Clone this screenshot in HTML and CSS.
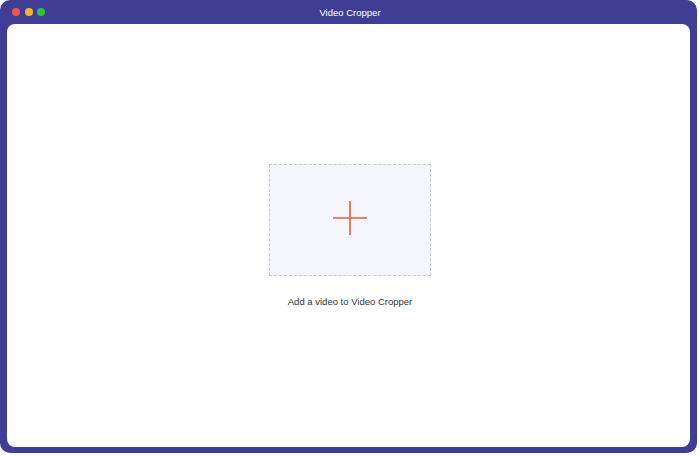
FILE: index.html
```html
<!DOCTYPE html>
<html lang="en">
<head>
    <meta charset="UTF-8">
    <meta name="viewport" content="width=device-width, initial-scale=1.0">
    <title>Video Cropper</title>
    <link rel="stylesheet" href="styles.css">
</head>
<body>
<div class="window">
    <div class="titlebar">
        <div class="lights">
            <span class="light red"></span>
            <span class="light yellow"></span>
            <span class="light green"></span>
        </div>
        <div class="title">Video Cropper</div>
    </div>
    <div class="panel">
        <div class="dropzone">
            <svg class="plus" width="34" height="34" viewBox="0 0 34 34">
                <path d="M17 0 V34 M0 17 H34" stroke="#f25a3c" stroke-width="1.6" fill="none"/>
            </svg>
        </div>
        <p class="hint">Add a video to Video Cropper</p>
    </div>
</div>
</body>
</html>
```

FILE: styles.css
```css
body {
    margin: 0;
    background: #ffffff;
    font-family: "Liberation Sans", Arial, sans-serif;
}
.window {
    width: 697px;
    height: 453px;
    box-sizing: border-box;
    padding: 0 7px 6px 7px;
    background-color: #3f3e94;
    border-radius: 10px;
    display: flex;
    flex-direction: column;
}
.titlebar {
    height: 24px;
    position: relative;
    display: flex;
    align-items: center;
    justify-content: center;
}
.lights {
    position: absolute;
    left: 5px;
    top: 8px;
    display: flex;
    gap: 4.5px;
}
.light {
    width: 8px;
    height: 8px;
    border-radius: 50%;
}
.red { background-color: #f0554f; }
.yellow { background-color: #f3b52b; }
.green { background-color: #2bc33f; }
.title {
    color: #ffffff;
    font-size: 9.5px;
    margin-left: 3px;
}
.panel {
    flex: 1;
    background-color: #ffffff;
    border-radius: 8px;
    display: flex;
    flex-direction: column;
    align-items: center;
    justify-content: center;
}
.dropzone {
    width: 162px;
    height: 112px;
    box-sizing: border-box;
    border: 1px dashed #c3c9dc;
    background-color: #f4f6fb;
    display: flex;
    align-items: center;
    justify-content: center;
    margin-left: 3px;
}
.plus {
    margin-bottom: 4px;
}
.hint {
    margin: 20px 0 0 3px;
    font-size: 9.5px;
    color: #333333;
}
```
